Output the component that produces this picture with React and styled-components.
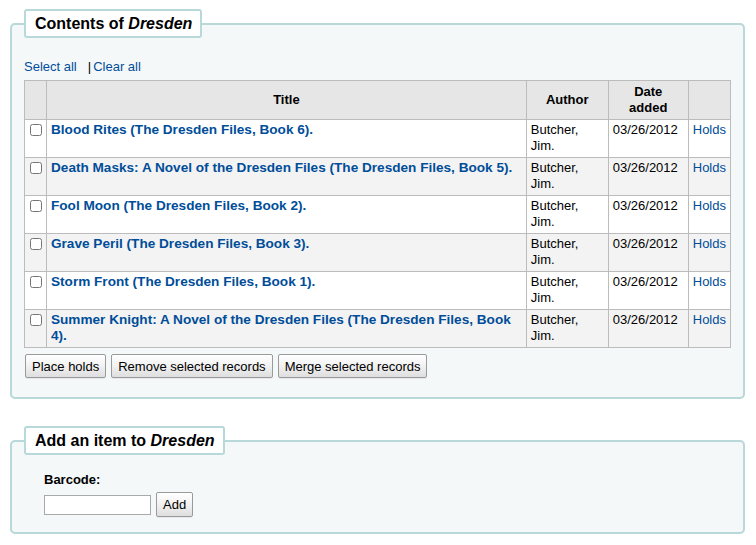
import React from 'react';
import styled, { createGlobalStyle } from 'styled-components';

const GlobalStyle = createGlobalStyle`
  html, body {
    margin: 0;
    padding: 0;
    background: #ffffff;
  }
  body {
    font-family: 'Liberation Sans', Arial, Helvetica, sans-serif;
    font-size: 13px;
    color: #000;
  }
`;

const Page = styled.div`
  padding: 9px 11px 10px 10px;
  display: flex;
  flex-direction: column;
  gap: 27px;
`;

const Fieldset = styled.fieldset`
  margin: 0;
  padding: 8px 12px ${(p) => p.$bottom || 19}px 12px;
  border: 2px solid #b9d8d9;
  border-radius: 5px;
  background: #f4f8f9;
  min-width: 0;
`;

const Legend = styled.legend`
  padding: 3px 8px 3px 9px;
  background: #fff;
  border: 2px solid #b9d8d9;
  border-radius: 3px;
  font-size: 16px;
  font-weight: bold;
  line-height: 19px;

  em {
    font-style: italic;
  }
`;

const SelectBar = styled.div`
  margin: 13px 0 5px;
  line-height: 16px;
`;

const Link = styled.a`
  color: #004d99;
  text-decoration: none;
  cursor: pointer;
`;

const Separator = styled.span`
  margin-left: 11px;
  margin-right: 2px;
`;

const Table = styled.table`
  width: 100%;
  border-collapse: collapse;
  border: 1px solid #bcbcbc;
  background: #fff;
`;

const Th = styled.th`
  background: #e6e6e6;
  border: 1px solid #bcbcbc;
  padding: 3px 4px 3px;
  font-weight: bold;
  text-align: center;
  line-height: 16px;
  height: 32px;
  width: ${(p) => p.$width || 'auto'};
`;

const Row = styled.tr`
  background: ${(p) => (p.$alt ? '#f3f3f3' : '#ffffff')};
`;

const Td = styled.td`
  border: 1px solid #bcbcbc;
  padding: 2px 4px 3px 4px;
  vertical-align: top;
  line-height: 16px;
  height: 32px;
`;

const CheckCell = styled(Td)`
  padding: 2px 3px 3px 3px;
`;

const Check = styled.input.attrs({ type: 'checkbox' })`
  margin: 2px 0 0 2px;
  width: 12px;
  height: 12px;
  vertical-align: top;
`;

const TitleLink = styled(Link)`
  font-weight: bold;
  font-size: 13.6px;
`;

const Actions = styled.div`
  display: flex;
  gap: 5px;
  margin-top: 6px;
  padding-left: 1px;
`;

const Button = styled.button`
  font-family: inherit;
  font-size: 13px;
  color: #000;
  height: ${(p) => p.$height || 24}px;
  padding: 0 6px;
  border: 1px solid #9a9a9a;
  border-radius: 2px;
  background: linear-gradient(to bottom, #ffffff 0%, #f3f3f3 45%, #dedede 100%);
  box-shadow: 0 1px 0 rgba(0, 0, 0, 0.06);
  cursor: pointer;
`;

const FormList = styled.div`
  padding: 9px 0 0 20px;
  display: flex;
  flex-direction: column;
  gap: 4px;
`;

const Label = styled.label`
  font-weight: bold;
  line-height: 16px;
`;

const InputRow = styled.div`
  display: flex;
  align-items: center;
  gap: 5px;
`;

const TextInput = styled.input`
  width: 107px;
  height: 20px;
  box-sizing: border-box;
  border: 1px solid #a9a9a9;
  background: #fff;
  padding: 1px 3px;
  font-family: inherit;
  font-size: 13px;
`;

const records = [
  'Blood Rites (The Dresden Files, Book 6).',
  'Death Masks: A Novel of the Dresden Files (The Dresden Files, Book 5).',
  'Fool Moon (The Dresden Files, Book 2).',
  'Grave Peril (The Dresden Files, Book 3).',
  'Storm Front (The Dresden Files, Book 1).',
  'Summer Knight: A Novel of the Dresden Files (The Dresden Files, Book 4).',
];

export default function App() {
  return (
    <>
      <GlobalStyle />
      <Page>
        <Fieldset>
          <Legend>
            Contents of <em>Dresden</em>
          </Legend>
          <SelectBar>
            <Link>Select all</Link>
            <Separator>|</Separator>
            <Link>Clear all</Link>
          </SelectBar>
          <Table>
            <thead>
              <tr>
                <Th $width="13px" />
                <Th>Title</Th>
                <Th $width="73px">Author</Th>
                <Th $width="71px">
                  Date
                  <br />
                  added
                </Th>
                <Th $width="32px" />
              </tr>
            </thead>
            <tbody>
              {records.map((title, i) => (
                <Row key={title} $alt={i % 2 === 1}>
                  <CheckCell>
                    <Check />
                  </CheckCell>
                  <Td>
                    <TitleLink>{title}</TitleLink>
                  </Td>
                  <Td>Butcher, Jim.</Td>
                  <Td>03/26/2012</Td>
                  <Td>
                    <Link>Holds</Link>
                  </Td>
                </Row>
              ))}
            </tbody>
          </Table>
          <Actions>
            <Button>Place holds</Button>
            <Button>Remove selected records</Button>
            <Button>Merge selected records</Button>
          </Actions>
        </Fieldset>

        <Fieldset $bottom={15}>
          <Legend>
            Add an item to <em>Dresden</em>
          </Legend>
          <FormList>
            <Label htmlFor="barcode">Barcode:</Label>
            <InputRow>
              <TextInput id="barcode" type="text" />
              <Button $height={25}>Add</Button>
            </InputRow>
          </FormList>
        </Fieldset>
      </Page>
    </>
  );
}
